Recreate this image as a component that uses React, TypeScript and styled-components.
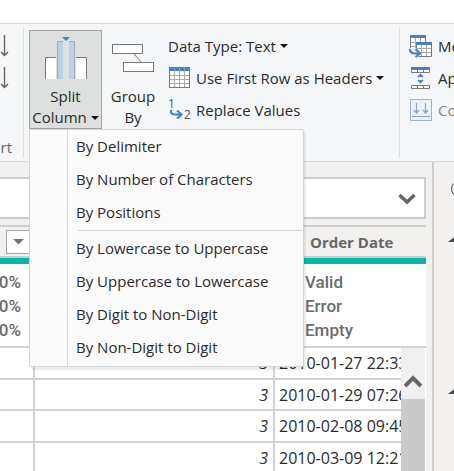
import React from "react";
import styled, { createGlobalStyle } from "styled-components";

const GlobalStyle = createGlobalStyle`
  *, *::before, *::after { box-sizing: border-box; }
  html, body { margin: 0; height: 100%; overflow: hidden; }
  body {
    background: #fff;
    color: #2b2b2b;
    font: 15px/20px "Open Sans", "Noto Sans", sans-serif;
  }
  button, input { font: inherit; color: inherit; }
`;

const Page = styled.div`
  display: flex;
  flex-direction: column;
  height: 100vh;
  overflow: hidden;
`;

const TabStrip = styled.header`
  flex: none;
  height: 23px;
`;

const Ribbon = styled.div`
  flex: none;
  display: flex;
  height: 139px;
  padding: 3px 0;
  background: #f4f6f8;
  border-top: 1px solid #d5d7d9;
  border-bottom: 1px solid #d5d9dc;
`;

const SortGroup = styled.section`
  flex: none;
  display: flex;
  flex-direction: column;
  align-items: flex-end;
  width: 24px;
  padding: 8px 10px 0 0;
  overflow: hidden;
  border-right: 1px solid #dcdee1;
  color: #666;
`;

const SortButton = styled.button`
  display: flex;
  justify-content: flex-end;
  height: 32px;
  margin-right: 4px;
  padding: 0;
  border: 0;
  background: none;
`;

const GroupLabel = styled.div`
  margin-top: 38px;
  margin-right: 1px;
`;

const TransformGroup = styled.section`
  flex: none;
  display: flex;
  align-items: flex-start;
  width: 376px;
  padding: 3px 0 0 5px;
  border-right: 1px solid #dcdee1;
`;

const MenuAnchor = styled.div`
  position: relative;
  flex: none;
`;

const LargeButton = styled.button<{ $open?: boolean }>`
  display: flex;
  flex-direction: column;
  align-items: center;
  width: ${(p) => (p.$open ? 73 : 62)}px;
  height: 99px;
  padding: 6px 0 0;
  border: 1px solid ${(p) => (p.$open ? "#a0a3a2" : "transparent")};
  background: ${(p) => (p.$open ? "#dde0de" : "none")};
  line-height: 21px;
`;

const LargeIcon = styled.span`
  display: flex;
  height: 50px;
`;

const WithCaret = styled.span`
  display: flex;
  align-items: center;
  gap: 4px;
  white-space: nowrap;
`;

const CommandList = styled.div<{ $gap: number }>`
  display: flex;
  flex-direction: column;
  align-items: flex-start;
  min-width: 0;
  padding: 0 0 0 ${(p) => p.$gap}px;
`;

const Command = styled.button`
  display: flex;
  align-items: center;
  gap: 6px;
  height: 32px;
  padding: 0;
  border: 0;
  background: none;
  white-space: nowrap;
  &:disabled { color: #8a8a8a; }
`;

const CombineGroup = styled.section`
  flex: 1;
  min-width: 0;
  overflow: hidden;
  padding-top: 3px;
`;

const Menu = styled.div`
  position: absolute;
  z-index: 5;
  top: 99px;
  left: 0;
  width: 275px;
  padding: 1px 0;
  background: linear-gradient(#d9dadb, #d9dadb) 37px 0 / 1px 100% no-repeat #fbfbfb;
  border: 1px solid #d4d5d6;
  border-radius: 2px;
  box-shadow: 2px 3px 0 rgba(0, 0, 0, 0.07);
`;

const MenuItem = styled.button`
  display: block;
  width: 100%;
  height: 33px;
  padding: 0 0 4px 46px;
  border: 0;
  background: none;
  text-align: left;
`;

const MenuSeparator = styled.hr`
  height: 3px;
  margin: 0 1px 0 48px;
  border: 0;
  border-top: 1px solid #d4d5d6;
`;

const Workspace = styled.div`
  flex: 1;
  min-height: 0;
  display: flex;
  background: #f2f1f0;
`;

const DataPane = styled.main`
  flex: 1;
  min-width: 0;
  padding: 15px 6px 0 0;
`;

const FormulaBar = styled.div`
  display: flex;
  height: 42px;
  margin-bottom: 6px;
  background: #fff;
  border: 2px solid #cdcdcb;
  border-left: 0;
`;

const FormulaInput = styled.input`
  flex: 1;
  min-width: 0;
  border: 0;
  background: none;
  outline: 0;
`;

const ExpandButton = styled.button`
  flex: none;
  display: flex;
  align-items: center;
  justify-content: center;
  width: 34px;
  padding: 2px 0 0;
  border: 0;
  background: none;
`;

const Preview = styled.table`
  width: 100%;
  table-layout: fixed;
  border-collapse: separate;
  border-spacing: 0;
  border-top: 2px solid #cdcdcb;
`;

const Col = styled.col<{ $width?: number }>`
  width: ${(p) => (p.$width ? p.$width + "px" : "auto")};
`;

const HeaderCell = styled.th`
  height: 37px;
  padding: 0 0 2px 35px;
  border-bottom: 6px solid #01b8aa;
  box-shadow: inset 0 -2px #cdcdcb;
  color: #666;
  font-weight: 700;
  text-align: left;
  overflow: hidden;
`;

const FilterHeader = styled(HeaderCell)`
  padding: 0 0 2px 6px;
`;

const FilterButton = styled.button`
  display: flex;
  align-items: center;
  width: 26px;
  height: 24px;
  padding: 0 0 0 6px;
  background: #fff;
  border: 1px solid #a6a6a6;
`;

const StatsCell = styled.td`
  height: 84px;
  padding: 6px 0 4px 30px;
  vertical-align: top;
  overflow: hidden;
  background: #fff;
  border-bottom: 2px solid #d2d2d2;
  color: #6c6c6c;
  font-family: Roboto, "Open Sans", sans-serif;
  font-size: 17px;
  font-weight: 500;
  line-height: 24px;
`;

const PercentCell = styled(StatsCell)`
  padding-left: 0;
  padding-right: 14px;
`;

const Percent = styled.div`
  display: flex;
  justify-content: flex-end;
`;

const Cell = styled.td<{ $number?: boolean; $tall?: boolean }>`
  height: ${(p) => (p.$tall ? 32 : 31)}px;
  padding: 0 ${(p) => (p.$number ? 5 : 0)}px 0 4px;
  overflow: hidden;
  white-space: nowrap;
  background: #fff;
  border-bottom: 2px solid #d2d2d2;
  border-right: ${(p) => (p.$number ? "2px solid #d2d2d2" : "0")};
  text-align: ${(p) => (p.$number ? "right" : "left")};
  font-style: ${(p) => (p.$number ? "italic" : "normal")};
  font-size: 16px;
`;

const ScrollCell = styled.td`
  padding: 0;
  vertical-align: top;
  background: #fff;
`;

const ScrollTrack = styled.div`
  width: 24px;
  background: #f0f0f0;
`;

const ScrollUp = styled.button`
  display: flex;
  align-items: center;
  justify-content: center;
  width: 24px;
  height: 51px;
  padding: 14px 0 0;
  border: 0;
  background: none;
`;

const ScrollThumb = styled.div`
  height: 76px;
  background: #cacaca;
`;

const SidePane = styled.aside`
  flex: none;
  display: flex;
  flex-direction: column;
  align-items: flex-start;
  width: 22px;
  padding: 18px 0 0 14px;
  overflow: hidden;
  border-left: 2px solid #cfcdcb;
`;

const SideHelp = styled.button`
  flex: none;
  display: flex;
  align-items: flex-start;
  height: 55px;
  padding: 0 0 0 3px;
  border: 0;
  background: none;
`;

const SideToggle = styled.button`
  flex: none;
  display: flex;
  align-items: flex-start;
  height: 152px;
  padding: 0;
  border: 0;
  background: none;
`;

const Svg = styled.svg`
  display: block;
  flex: none;
`;

const BLUE = "#4a80bd";
const LINE = "#777a7d";

const Caret = () => (
  <Svg width="8" height="4" viewBox="0 0 8 4">
    <path d="M0 0h8L4 4z" fill="#111" />
  </Svg>
);

const SortArrow = () => (
  <Svg width="9" height="22" viewBox="0 0 9 22">
    <path d="M4.500 0v21M1 17l3.500 3.500L8 17" fill="none" stroke="#666" strokeWidth="1.4" />
  </Svg>
);

const SplitIcon = () => (
  <Svg width="42" height="43" viewBox="0 0 42 43">
    <path d="M17 0h8l-4 4z" fill={BLUE} />
    <path d="M0 20h11v22H0zM31 20h11v22H31z" fill="#fff" />
    <path d="M.5 42V20.500H11M31 20.500h10.500V42" fill="none" stroke={LINE} />
    <path d="M12 5h6v37h-6zM24 5h6v37h-6z" fill="#bdd0e8" />
    <path d="M12.500 42V4.500H18M24 4.500h5.500V42" fill="none" stroke="#a5a8ab" />
  </Svg>
);

const GroupIcon = () => (
  <Svg width="42" height="36" viewBox="0 0 42 36">
    <path d="M22 17l8 9" stroke={LINE} />
    <g fill="#fff" stroke={LINE}>
      <rect x=".5" y="7.500" width="30" height="9" />
      <rect x="11.500" y="25.500" width="30" height="9" />
    </g>
  </Svg>
);

const TableIcon = () => (
  <Svg width="22" height="22" viewBox="0 0 22 22">
    <rect x="1.500" y=".5" width="20" height="20" fill="#fff" stroke={LINE} />
    <path d="M2 8.500h19M2 12.500h19M2 16.500h19M6.500 4v16M11.500 4v16M16.500 4v16" stroke="#a9abad" />
    <path d="M2 1h19v3H2z" fill={BLUE} />
    <path d="M6.500 1v3M11.500 1v3M16.500 1v3" stroke="#7fa5d0" />
  </Svg>
);

const ReplaceIcon = () => (
  <Svg width="22" height="22" viewBox="0 0 22 22" overflow="visible">
    <g fill="#555" fontFamily="Open Sans, sans-serif" fontSize="12">
      <text x="0" y="9">1</text>
      <text x="16" y="20">2</text>
    </g>
    <path d="M3 11v1.500c0 2 1.500 3 4 3h6M9 11.500l4.500 4-4.500 4" fill="none" stroke={BLUE} strokeWidth="2.200" />
  </Svg>
);

const MergeIcon = () => (
  <Svg width="23" height="24" viewBox="0 0 23 24">
    <path d="M1.500 1.500h15v13h-15z" fill="#fff" stroke={LINE} />
    <path d="M2 8.500h14M2 12.500h14M6.500 4v11M11.500 4v11" stroke="#a9abad" />
    <path d="M1 1h16v3H1z" fill={BLUE} />
    <path d="M7.500 8.500h15v14h-15z" fill="#fff" stroke={LINE} />
    <path d="M8 14.500h14M8 18.500h14M12.500 11v11M17.500 11v11" stroke="#a9abad" />
    <path d="M7 8h16v3H7z" fill={BLUE} />
    <path d="M0 14h7l5 5-4 5H0z" fill="#f4f6f8" />
    <path d="M1 15c0 3 2 4.500 5 4.500h4M6.500 15l4.500 4.500L6.500 23" fill="none" stroke={BLUE} strokeWidth="2.200" />
  </Svg>
);

const AppendIcon = () => (
  <Svg width="23" height="22" viewBox="0 0 23 22">
    <path d="M2.500.5h18v5h-18zM2.500 18.500h18v3h-18z" fill="#fff" stroke={LINE} />
    <path d="M8.500 3v3M14.500 3v3M8.500 18v4M14.500 18v4" stroke={LINE} />
    <path d="M2 0h19v3H2z" fill={BLUE} />
    <path d="M11.500 7v3M11.500 13v3M9 10l2.500-2.500L14 10M9 13l2.500 2.500L14 13" fill="none" stroke={BLUE} strokeWidth="1.500" />
  </Svg>
);

const CombineIcon = () => (
  <Svg width="23" height="22" viewBox="0 0 23 22">
    <rect x="1.500" y=".5" width="21" height="21" fill="#e9f1fb" stroke="#9eb0cd" />
    <path d="M3 17.500h18M7.500 4v10M16.500 4v10M5 11l2.500 3 2.500-3M14 11l2.500 3 2.500-3" fill="none" stroke="#92a5c5" strokeWidth="1.200" />
  </Svg>
);

const Chevron = ({ up }: { up?: boolean }) => (
  <Svg width="18" height="14" viewBox="0 0 18 14">
    <path d={up ? "M1 12l8-8 8 8" : "M1.500 3l7.500 7 7.500-7"} fill="none" stroke="#666" strokeWidth={up ? 4 : 3.6} />
  </Svg>
);

const FilterArrow = () => (
  <Svg width="11" height="6" viewBox="0 0 11 6">
    <path d="M0 0h11L5.500 5.500z" fill="#777" />
  </Svg>
);

const CornerTriangle = () => (
  <Svg width="9" height="7" viewBox="0 0 9 7">
    <path d="M9 0v7H0z" fill="#4a4a4a" />
  </Svg>
);

const HelpRing = () => (
  <Svg width="16" height="18" viewBox="0 0 16 18">
    <circle cx="8" cy="9" r="7.500" fill="none" stroke="#444" />
  </Svg>
);

const columnActions = ["By Delimiter", "By Number of Characters", "By Positions"];
const caseActions = [
  "By Lowercase to Uppercase",
  "By Uppercase to Lowercase",
  "By Digit to Non-Digit",
  "By Non-Digit to Digit",
];
const dates = ["2010-01-27 22:33", "2010-01-29 07:26", "2010-02-08 09:45", "2010-03-09 12:21"];

export default function App() {
  return (
    <Page>
      <GlobalStyle />
      <TabStrip />
      <Ribbon>
        <SortGroup>
          <SortButton aria-label="Sort ascending"><SortArrow /></SortButton>
          <SortButton aria-label="Sort descending"><SortArrow /></SortButton>
          <GroupLabel>Sort</GroupLabel>
        </SortGroup>
        <TransformGroup>
          <MenuAnchor>
            <LargeButton $open aria-haspopup="menu" aria-expanded="true">
              <LargeIcon><SplitIcon /></LargeIcon>
              <span>Split</span>
              <WithCaret>Column <Caret /></WithCaret>
            </LargeButton>
            <Menu role="menu">
              {columnActions.map((label) => (
                <MenuItem key={label} role="menuitem">{label}</MenuItem>
              ))}
              <MenuSeparator />
              {caseActions.map((label) => (
                <MenuItem key={label} role="menuitem">{label}</MenuItem>
              ))}
            </Menu>
          </MenuAnchor>
          <LargeButton>
            <LargeIcon><GroupIcon /></LargeIcon>
            <span>Group</span>
            <span>By</span>
          </LargeButton>
          <CommandList $gap={4}>
            <Command><WithCaret>Data Type: Text <Caret /></WithCaret></Command>
            <Command><TableIcon /><WithCaret>Use First Row as Headers <Caret /></WithCaret></Command>
            <Command><ReplaceIcon />Replace Values</Command>
          </CommandList>
        </TransformGroup>
        <CombineGroup>
          <CommandList $gap={9}>
            <Command><MergeIcon />Merge</Command>
            <Command><AppendIcon />Append</Command>
            <Command disabled><CombineIcon />Combine</Command>
          </CommandList>
        </CombineGroup>
      </Ribbon>
      <Workspace>
        <DataPane>
          <FormulaBar>
            <FormulaInput aria-label="Formula" />
            <ExpandButton aria-label="Expand formula bar"><Chevron /></ExpandButton>
          </FormulaBar>
          <Preview>
            <colgroup>
              <Col $width={35} />
              <Col $width={240} />
              <Col />
              <Col $width={25} />
            </colgroup>
            <thead>
              <tr>
                <FilterHeader>
                  <FilterButton aria-label="Filter column"><FilterArrow /></FilterButton>
                </FilterHeader>
                <HeaderCell />
                <HeaderCell colSpan={2}>Order Date</HeaderCell>
              </tr>
            </thead>
            <tbody>
              <tr>
                <PercentCell>
                  <Percent>100%</Percent>
                  <Percent>0%</Percent>
                  <Percent>0%</Percent>
                </PercentCell>
                <StatsCell />
                <StatsCell colSpan={2}>
                  <div>Valid</div>
                  <div>Error</div>
                  <div>Empty</div>
                </StatsCell>
              </tr>
              {dates.map((date, i) => (
                <tr key={date}>
                  <Cell $number $tall={i !== 1} />
                  <Cell $number $tall={i !== 1}>3</Cell>
                  <Cell $tall={i !== 1}>{date}</Cell>
                  {i === 0 && (
                    <ScrollCell rowSpan={4}>
                      <ScrollTrack>
                        <ScrollUp aria-label="Scroll up"><Chevron up /></ScrollUp>
                        <ScrollThumb />
                      </ScrollTrack>
                    </ScrollCell>
                  )}
                </tr>
              ))}
            </tbody>
          </Preview>
        </DataPane>
        <SidePane>
          <SideHelp aria-label="Help"><HelpRing /></SideHelp>
          <SideToggle aria-label="Collapse properties"><CornerTriangle /></SideToggle>
          <SideToggle aria-label="Collapse applied steps"><CornerTriangle /></SideToggle>
        </SidePane>
      </Workspace>
    </Page>
  );
}
